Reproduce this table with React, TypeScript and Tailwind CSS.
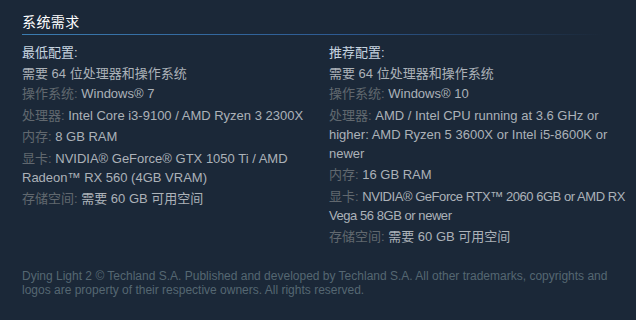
const FONT = "font-['Liberation_Sans','Arial','Noto_Sans_CJK_SC',sans-serif]";

type Req = { label?: string; value: string; tight?: boolean };

const minimum: Req[] = [
  { value: '需要 64 位处理器和操作系统' },
  { label: '操作系统:', value: 'Windows® 7' },
  { label: '处理器:', value: 'Intel Core i3-9100 / AMD Ryzen 3 2300X' },
  { label: '内存:', value: '8 GB RAM' },
  { label: '显卡:', value: 'NVIDIA® GeForce® GTX 1050 Ti / AMD Radeon™ RX 560 (4GB VRAM)' },
  { label: '存储空间:', value: '需要 60 GB 可用空间' },
];

const recommended: Req[] = [
  { value: '需要 64 位处理器和操作系统' },
  { label: '操作系统:', value: 'Windows® 10' },
  {
    label: '处理器:',
    value: 'AMD / Intel CPU running at 3.6 GHz or higher: AMD Ryzen 5 3600X or Intel i5-8600K or newer',
  },
  { label: '内存:', value: '16 GB RAM' },
  // Liberation est un peu plus large que la police d'origine
  { label: '显卡:', value: 'NVIDIA® GeForce RTX™ 2060 6GB or AMD RX Vega 56 8GB or newer', tight: true },
  { label: '存储空间:', value: '需要 60 GB 可用空间' },
];

function ReqColumn({ title, items, width }: { title: string; items: Req[]; width: string }) {
  return (
    <div className={`${width} shrink-0`}>
      <div className="text-[#c7d5e0] leading-[20px]">{title}</div>
      <ul className="mt-[0.5px]">
        {items.map((item, i) => (
          <li
            key={i}
            className={`leading-[19px] text-[#acb2b8] ${item.label ? 'mb-[2.5px]' : 'mb-[1.5px]'} ${
              item.tight ? 'tracking-[-0.45px]' : ''
            }`}
          >
            {item.label && <span className="text-[#61686f] tracking-normal">{item.label} </span>}
            {item.value}
          </li>
        ))}
      </ul>
    </div>
  );
}

export default function App() {
  return (
    <div className={`w-[636px] h-[320px] overflow-hidden bg-[#1b2838] px-[22px] pt-[13px] text-[13px] ${FONT}`}>
      {/* 标题 */}
      <h2 className="text-[14px] leading-[18px] tracking-[0.03em] text-white mb-[3px]">系统需求</h2>
      <div className="h-px w-[580px] bg-[linear-gradient(to_right,#3b7cb0_0%,#2d5a92_55%,#1b2838_100%)]" />

      <div className="flex mt-[8px]">
        <ReqColumn title="最低配置:" items={minimum} width="w-[295px]" />
        <div className="w-[12px] shrink-0" />
        <ReqColumn title="推荐配置:" items={recommended} width="w-[306px]" />
      </div>

      <p className="mt-[20px] w-[592px] text-[12px] leading-[14px] text-[#556772]">
        Dying Light 2 © Techland S.A. Published and developed by Techland S.A. All other trademarks, copyrights and
        logos are property of their respective owners. All rights reserved.
      </p>
    </div>
  );
}
